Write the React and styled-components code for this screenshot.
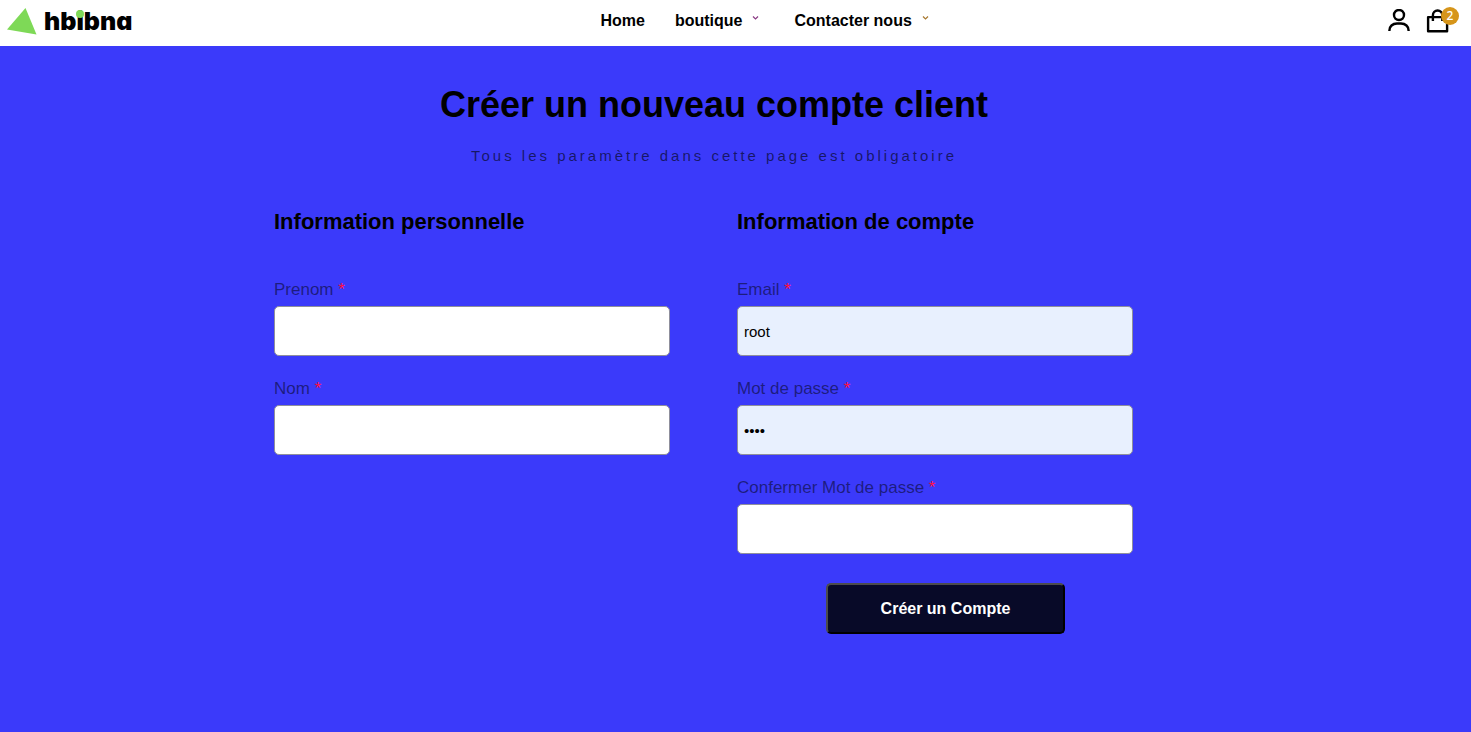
import React, { useState } from "react";
import styled, { createGlobalStyle } from "styled-components";

const GlobalStyle = createGlobalStyle`
  *, *::before, *::after { box-sizing: border-box; }
  body {
    margin: 0;
    background: #3b3afa;
    color: #000;
    font-family: "Liberation Sans", Arial, sans-serif;
  }
`;

const Header = styled.header`
  display: flex;
  justify-content: space-between;
  align-items: center;
  height: 46px;
  padding: 0 12px 4px 7px;
  background: #fff;
`;

const Brand = styled.a`
  display: flex;
  align-items: center;
  gap: 7px;
  color: #000;
  text-decoration: none;
`;

const BrandName = styled.span`
  font: 900 25px/32px Inter, sans-serif;
  font-feature-settings: "cv11";
`;

const DottedLetter = styled.span`
  position: relative;

  &::after {
    content: "";
    position: absolute;
    top: 4px;
    left: 50%;
    width: 8px;
    height: 8px;
    margin-left: -4px;
    border-radius: 50%;
    background: #7ed957;
  }
`;

const Nav = styled.nav`
  display: flex;
  align-items: center;
  gap: 30px;
  padding-left: 14px;
`;

const NavLink = styled.a`
  display: flex;
  align-items: center;
  gap: 10px;
  padding-right: ${(p) => (p.$menu ? "5px" : "0")};
  color: #000;
  font-size: 16px;
  font-weight: 700;
  line-height: 20px;
  text-decoration: none;

  svg { margin-bottom: 6px; color: ${(p) => p.$tint}; }
`;

const Actions = styled.div`
  display: flex;
  align-items: center;
  gap: 16px;
`;

const IconButton = styled.button`
  position: relative;
  display: flex;
  padding: 0;
  border: 0;
  background: none;
  color: #000;
  cursor: pointer;
`;

const Badge = styled.span`
  position: absolute;
  top: -2px;
  right: 0;
  width: 18px;
  height: 18px;
  border-radius: 50%;
  background: #d6951a;
  color: #fff;
  font: 500 12px/18px "Noto Sans", sans-serif;
  text-align: center;
`;

const Main = styled.main`
  max-width: 923px;
  margin: 0 auto;
  padding: 37px 43px 40px 0;
`;

const Title = styled.h1`
  margin: 0;
  font-size: 36px;
  line-height: 44px;
  text-align: center;
`;

const Intro = styled.p`
  margin: 19px 0 42px;
  color: rgba(0, 0, 0, 0.6);
  font-size: 15px;
  line-height: 20px;
  letter-spacing: 3px;
  text-align: center;
`;

const Form = styled.form`
  display: grid;
  grid-template-columns: 1fr 1fr;
  gap: 46px;
`;

const Column = styled.section`
  display: flex;
  flex-direction: column;
  gap: 23px;
`;

const SectionTitle = styled.h2`
  margin: 0 0 21px;
  font-size: 22px;
  line-height: 28px;
`;

const FieldBox = styled.div`
  display: flex;
  flex-direction: column;
  gap: 6px;
  width: 95%;
`;

const Label = styled.label`
  color: rgba(0, 0, 0, 0.5);
  font-size: 17px;
  line-height: 20px;
`;

const Required = styled.span`
  color: #ff1040;
`;

const Input = styled.input`
  width: 100%;
  height: 50px;
  padding: 0 6px;
  border: 1px solid #8f8f9c;
  border-radius: 5px;
  background: ${(p) => (p.$filled ? "#e8f0fe" : "#fff")};
  color: #000;
  font: 15px "Liberation Sans", Arial, sans-serif;
`;

const Submit = styled.button`
  align-self: center;
  width: 239px;
  height: 51px;
  margin-top: 6px;
  border: 2px solid;
  border-color: #4c4c4c #000 #000 #4c4c4c;
  border-radius: 5px;
  background: #080a28;
  color: #fff;
  font: 700 16px "Liberation Sans", Arial, sans-serif;
  cursor: pointer;
`;

const LogoMark = () => (
  <svg width="30" height="28" viewBox="0 0 30 28" aria-hidden="true">
    <path d="M18.5 1 29.5 27.5 0 22.5Z" fill="#7ed957" />
  </svg>
);

const Chevron = () => (
  <svg width="7" height="4" viewBox="0 0 7 4" fill="none" stroke="currentColor" strokeWidth="1.2" aria-hidden="true">
    <path d="M1 .5 3.5 3 6 .5" />
  </svg>
);

const UserIcon = () => (
  <svg width="22" height="24" viewBox="0 0 22 24" fill="none" stroke="currentColor" strokeWidth="2.4" aria-hidden="true">
    <circle cx="11" cy="6" r="5" />
    <path d="M1.4 22v-.5C1.4 17.5 4.5 14.5 9 14.5h4c4.5 0 7.6 3 7.6 7v.5" />
  </svg>
);

const BagIcon = () => (
  <svg width="33" height="24" viewBox="0 0 33 24" fill="none" stroke="currentColor" strokeWidth="2.4" strokeLinejoin="round" aria-hidden="true">
    <path d="M2.1 8.1h19v14.2h-19zM6.9 12V6.2a4.7 4.7 0 0 1 9.4 0V12" />
  </svg>
);

function Field({ id, label, type = "text", initial = "" }) {
  const [value, setValue] = useState(initial);
  return (
    <FieldBox>
      <Label htmlFor={id}>
        {label} <Required>*</Required>
      </Label>
      <Input
        id={id}
        type={type}
        value={value}
        $filled={initial !== ""}
        onChange={(e) => setValue(e.target.value)}
      />
    </FieldBox>
  );
}

export default function App() {
  return (
    <>
      <GlobalStyle />
      <Header>
        <Brand href="#">
          <LogoMark />
          <BrandName>
            hb<DottedLetter>i</DottedLetter>bna
          </BrandName>
        </Brand>
        <Nav>
          <NavLink href="#">Home</NavLink>
          <NavLink href="#" $menu $tint="#8a3a84">
            boutique <Chevron />
          </NavLink>
          <NavLink href="#" $menu $tint="#a87830">
            Contacter nous <Chevron />
          </NavLink>
        </Nav>
        <Actions>
          <IconButton type="button" aria-label="Compte">
            <UserIcon />
          </IconButton>
          <IconButton type="button" aria-label="Panier">
            <BagIcon />
            <Badge>2</Badge>
          </IconButton>
        </Actions>
      </Header>
      <Main>
        <Title>Créer un nouveau compte client</Title>
        <Intro>Tous les paramètre dans cette page est obligatoire</Intro>
        <Form onSubmit={(e) => e.preventDefault()}>
          <Column>
            <SectionTitle>Information personnelle</SectionTitle>
            <Field id="prenom" label="Prenom" />
            <Field id="nom" label="Nom" />
          </Column>
          <Column>
            <SectionTitle>Information de compte</SectionTitle>
            <Field id="email" label="Email" initial="root" />
            <Field id="password" label="Mot de passe" type="password" initial="root" />
            <Field id="confirm" label="Confermer Mot de passe" type="password" />
            <Submit type="submit">Créer un Compte</Submit>
          </Column>
        </Form>
      </Main>
    </>
  );
}
